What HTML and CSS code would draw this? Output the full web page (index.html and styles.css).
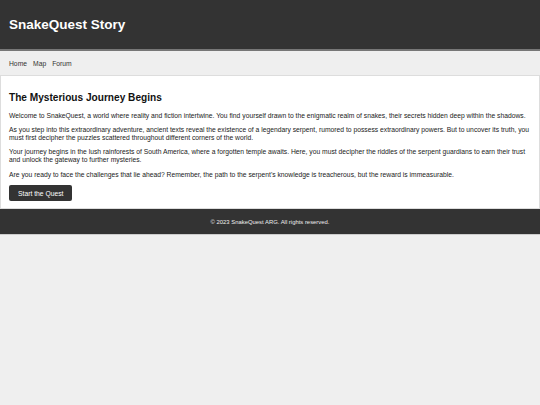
FILE: index.html
```html
<!DOCTYPE html>
<html lang="en">
<head>
  <meta charset="UTF-8" />
  <title>SnakeQuest Story</title>
  <meta name="viewport" content="width=device-width, initial-scale=1.0">
  <link rel="stylesheet" href="styles.css">
</head>
<body>

<header class="site-header">
  <h1>SnakeQuest Story</h1>
</header>

<nav class="site-nav">
  <a href="#">Home</a>
  <a href="#">Map</a>
  <a href="#">Forum</a>
</nav>

<main class="story">
  <h2>The Mysterious Journey Begins</h2>
  <p>Welcome to SnakeQuest, a world where reality and fiction intertwine. You find yourself drawn to the enigmatic realm of snakes, their secrets hidden deep within the shadows.</p>
  <p>As you step into this extraordinary adventure, ancient texts reveal the existence of a legendary serpent, rumored to possess extraordinary powers. But to uncover its truth, you must first decipher the puzzles scattered throughout different corners of the world.</p>
  <p>Your journey begins in the lush rainforests of South America, where a forgotten temple awaits. Here, you must decipher the riddles of the serpent guardians to earn their trust and unlock the gateway to further mysteries.</p>
  <p>Are you ready to face the challenges that lie ahead? Remember, the path to the serpent's knowledge is treacherous, but the reward is immeasurable.</p>
  <button type="button" class="btn">Start the Quest</button>
</main>

<footer class="site-footer">
  <p>&copy; 2023 SnakeQuest ARG. All rights reserved.</p>
</footer>

</body>
</html>
```

FILE: styles.css
```css
* {
  box-sizing: border-box;
}

body {
  font-family: "Liberation Sans", Arial, sans-serif;
  font-size: 6.75px;
  background: #efefef;
  color: #222;
  margin: 0;
  padding: 0;
}

.site-header {
  background: #333;
  color: #fff;
  height: 51px;
  padding: 0 9px;
  display: flex;
  align-items: center;
  border-bottom: 2px solid #777;
}

.site-header h1 {
  margin: 0;
  font-size: 13.5px;
  font-weight: bold;
}

.site-nav {
  background: #efefef;
  height: 24px;
  padding: 0 9px;
  display: flex;
  align-items: center;
  gap: 6px;
}

.site-nav a {
  color: #333;
  text-decoration: none;
}

.story {
  background: #fff;
  border: 1px solid #ddd;
  padding: 9px 8px 7px;
}

.story h2 {
  font-size: 10.125px;
  margin: 7px 0 8.5px;
  color: #111;
}

.story p {
  margin: 0 0 6.75px;
  line-height: 7.8px;
}

.btn {
  display: block;
  background: #333;
  color: #fff;
  border: none;
  border-radius: 2px;
  font-family: inherit;
  font-size: 6.75px;
  padding: 0 9px;
  height: 16px;
  cursor: pointer;
}

.site-footer {
  background: #333;
  color: #eee;
  height: 26px;
  display: flex;
  align-items: center;
  justify-content: center;
  border-bottom: 1px solid #ccc;
}

.site-footer p {
  margin: 0;
  font-size: 5.9px;
}
```
